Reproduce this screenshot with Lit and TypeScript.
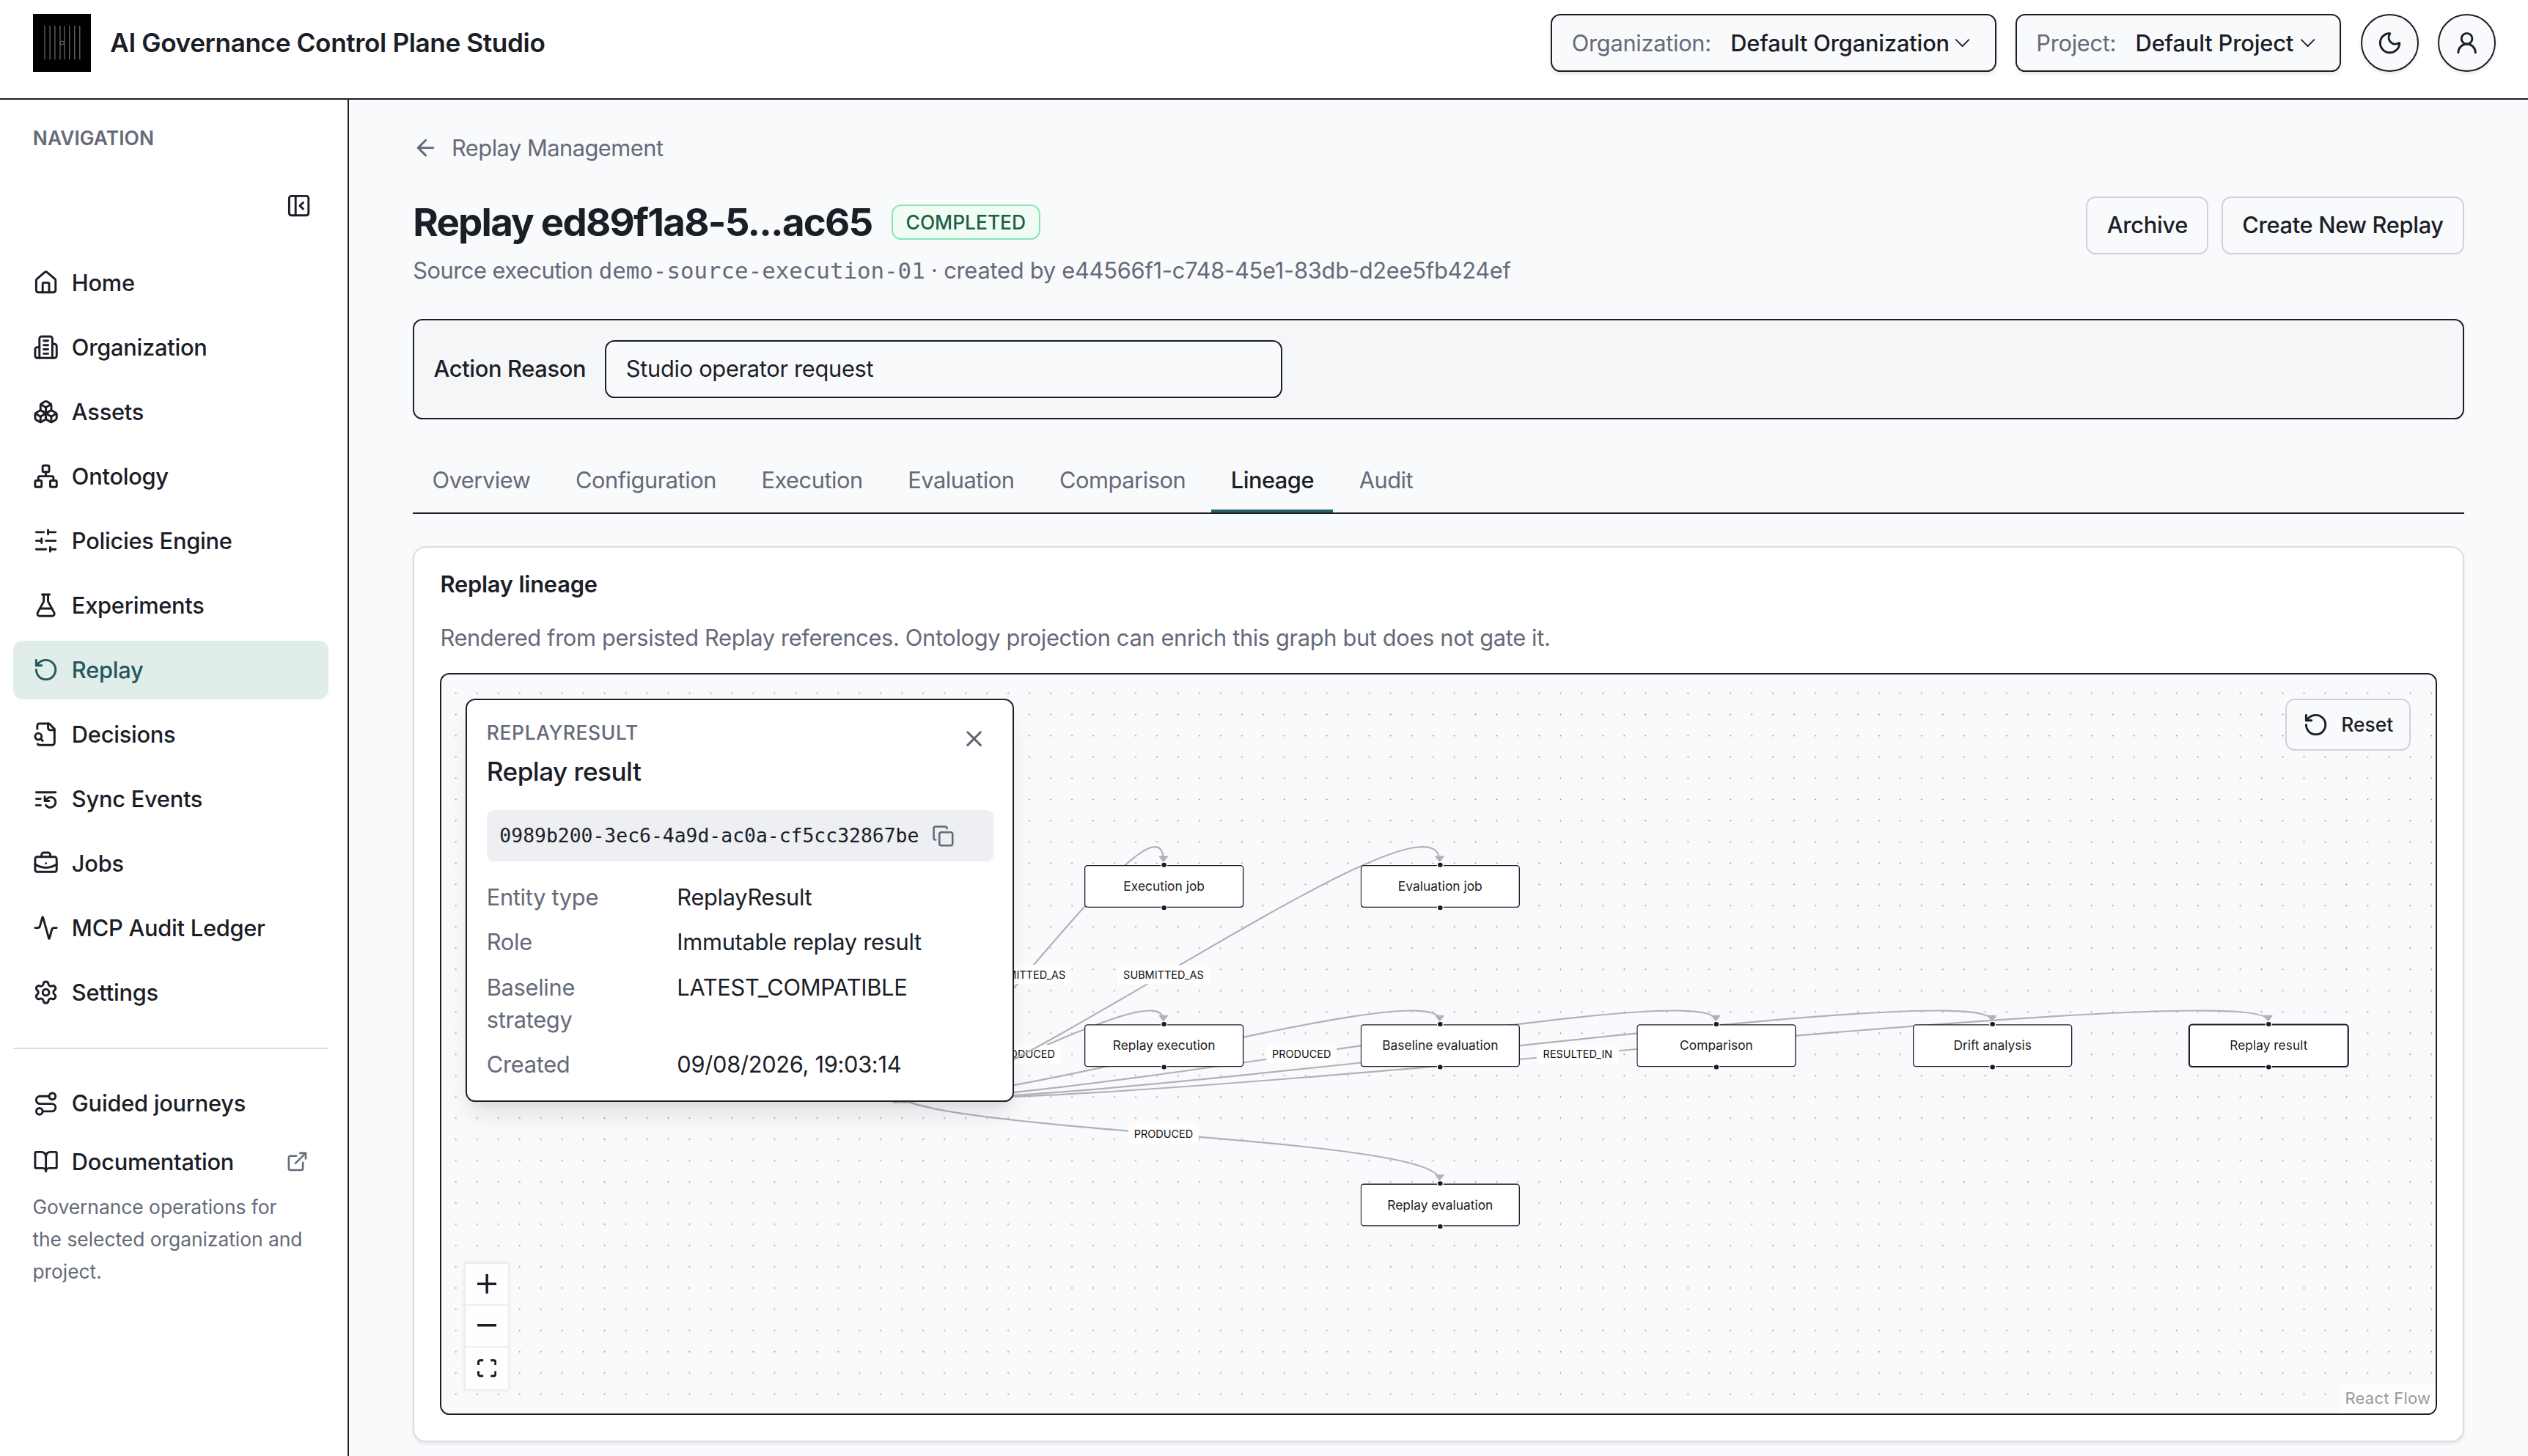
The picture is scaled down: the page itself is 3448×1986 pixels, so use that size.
import { LitElement, html, svg, css } from "lit";
import { customElement, property } from "lit/decorators.js";
import { classMap } from "lit/directives/class-map.js";

const ICONS: Record<string, unknown> = {
  home: svg`<path d="M15 21v-8a1 1 0 0 0-1-1h-4a1 1 0 0 0-1 1v8"/><path d="M3 10a2 2 0 0 1 .709-1.528l7-5.999a2 2 0 0 1 2.582 0l7 5.999A2 2 0 0 1 21 10v9a2 2 0 0 1-2 2H5a2 2 0 0 1-2-2z"/>`,
  building: svg`<path d="M6 22V4a2 2 0 0 1 2-2h8a2 2 0 0 1 2 2v18Z"/><path d="M6 12H4a2 2 0 0 0-2 2v6a2 2 0 0 0 2 2h2"/><path d="M18 9h2a2 2 0 0 1 2 2v9a2 2 0 0 1-2 2h-2"/><path d="M10 6h4M10 10h4M10 14h4M10 18h4"/>`,
  boxes: svg`<path d="M2.97 12.92A2 2 0 0 0 2 14.63v3.24a2 2 0 0 0 .97 1.71l3 1.8a2 2 0 0 0 2.06 0L12 19v-5.5l-5-3-4.03 2.42Z"/><path d="m7 16.5-4.74-2.85"/><path d="m7 16.5 5-3"/><path d="M7 16.5v5.17"/><path d="M12 13.5V19l3.97 2.38a2 2 0 0 0 2.06 0l3-1.8a2 2 0 0 0 .97-1.71v-3.24a2 2 0 0 0-.97-1.71L17 10.5l-5 3Z"/><path d="m17 16.5-5-3"/><path d="m17 16.5 4.74-2.85"/><path d="M17 16.5v5.17"/><path d="M7.97 4.42A2 2 0 0 0 7 6.13v4.37l5 3 5-3V6.13a2 2 0 0 0-.97-1.71l-3-1.8a2 2 0 0 0-2.06 0l-3 1.8Z"/><path d="M12 8 7.26 5.15"/><path d="m12 8 4.74-2.85"/><path d="M12 13.5V8"/>`,
  network: svg`<rect x="16" y="16" width="6" height="6" rx="1"/><rect x="2" y="16" width="6" height="6" rx="1"/><rect x="9" y="2" width="6" height="6" rx="1"/><path d="M5 16v-3a1 1 0 0 1 1-1h12a1 1 0 0 1 1 1v3"/><path d="M12 12V8"/>`,
  sliders: svg`<path d="M21 4h-7M10 4H3M21 12h-9M8 12H3M21 20h-5M12 20H3M14 2v4M8 10v4M16 18v4"/>`,
  flask: svg`<path d="M14 2v6a2 2 0 0 0 .245.96l5.51 10.08A2 2 0 0 1 18 22H6a2 2 0 0 1-1.755-2.96l5.51-10.08A2 2 0 0 0 10 8V2"/><path d="M6.453 15h11.094"/><path d="M8.5 2h7"/>`,
  replay: svg`<path d="M3 12a9 9 0 1 0 9-9 9.75 9.75 0 0 0-6.74 2.74L3 8"/><path d="M3 3v5h5"/>`,
  fileSearch: svg`<path d="M14 2v4a2 2 0 0 0 2 2h4"/><path d="M4.268 21a2 2 0 0 0 1.727 1H18a2 2 0 0 0 2-2V7l-5-5H6a2 2 0 0 0-2 2v3"/><path d="m9 18-1.5-1.5"/><circle cx="5" cy="14" r="3"/>`,
  listRestart: svg`<path d="M21 6H3"/><path d="M7 12H3"/><path d="M7 18H3"/><path d="M12 18a5 5 0 0 0 9-3 4.5 4.5 0 0 0-4.5-4.5c-1.33 0-2.54.54-3.41 1.41L11 14"/><path d="M11 10v4h4"/>`,
  briefcase: svg`<path d="M12 12h.01"/><path d="M16 6V4a2 2 0 0 0-2-2h-4a2 2 0 0 0-2 2v2"/><path d="M22 13a18.15 18.15 0 0 1-20 0"/><rect width="20" height="14" x="2" y="6" rx="2"/>`,
  activity: svg`<path d="M22 12h-2.48a2 2 0 0 0-1.93 1.46l-2.35 8.36a.25.25 0 0 1-.48 0L9.24 2.18a.25.25 0 0 0-.48 0l-2.35 8.36A2 2 0 0 1 4.49 12H2"/>`,
  settings: svg`<path d="M9.671 4.136a2.34 2.34 0 0 1 4.659 0 2.34 2.34 0 0 0 3.319 1.915 2.34 2.34 0 0 1 2.33 4.033 2.34 2.34 0 0 0 0 3.831 2.34 2.34 0 0 1-2.33 4.033 2.34 2.34 0 0 0-3.319 1.915 2.34 2.34 0 0 1-4.659 0 2.34 2.34 0 0 0-3.32-1.915 2.34 2.34 0 0 1-2.33-4.033 2.34 2.34 0 0 0 0-3.831A2.34 2.34 0 0 1 6.35 6.051a2.34 2.34 0 0 0 3.319-1.915"/><circle cx="12" cy="12" r="3"/>`,
  route: svg`<circle cx="6" cy="19" r="3"/><path d="M9 19h8.5a3.5 3.5 0 0 0 0-7h-11a3.5 3.5 0 0 1 0-7H15"/><circle cx="18" cy="5" r="3"/>`,
  book: svg`<path d="M12 7v14"/><path d="M3 18a1 1 0 0 1-1-1V4a1 1 0 0 1 1-1h5a4 4 0 0 1 4 4 4 4 0 0 1 4-4h5a1 1 0 0 1 1 1v13a1 1 0 0 1-1 1h-6a3 3 0 0 0-3 3 3 3 0 0 0-3-3z"/>`,
  external: svg`<path d="M15 3h6v6"/><path d="M10 14 21 3"/><path d="M18 13v6a2 2 0 0 1-2 2H5a2 2 0 0 1-2-2V8a2 2 0 0 1 2-2h6"/>`,
  panelClose: svg`<rect width="18" height="18" x="3" y="3" rx="2"/><path d="M9 3v18"/><path d="m16 15-3-3 3-3"/>`,
  moon: svg`<path d="M20.985 12.486a9 9 0 1 1-9.473-9.472c.405-.022.617.46.402.803a6 6 0 0 0 8.268 8.268c.344-.215.825-.004.803.401"/>`,
  user: svg`<circle cx="12" cy="8" r="5"/><path d="M20 21a8 8 0 0 0-16 0"/>`,
  chevron: svg`<path d="m6 9 6 6 6-6"/>`,
  back: svg`<path d="m12 19-7-7 7-7"/><path d="M19 12H5"/>`,
  close: svg`<path d="M18 6 6 18"/><path d="m6 6 12 12"/>`,
  copy: svg`<rect width="14" height="14" x="8" y="8" rx="2"/><path d="M4 16c-1.1 0-2-.9-2-2V4c0-1.1.9-2 2-2h10c1.1 0 2 .9 2 2"/>`,
};

@customElement("ui-icon")
class UiIcon extends LitElement {
  @property() name = "";
  @property({ type: Number }) size = 16;
  @property({ type: Number }) stroke = 2;
  static styles = css`
    :host { display: inline-flex; flex: none; }
    svg { display: block; fill: none; stroke: currentColor; stroke-linecap: round; stroke-linejoin: round; }
  `;
  render() {
    return html`<svg width=${this.size} height=${this.size} viewBox="0 0 24 24" stroke-width=${this.stroke}>${ICONS[this.name]}</svg>`;
  }
}

/* Flow geometry: node grid is 260 × 150, scaled by the viewport zoom. */
const NODE_W = 150;
const SOURCE = { x: -185, y: 210 };

interface FlowNode { id: string; label: string; x: number; y: number; selected?: boolean }
const NODES: FlowNode[] = [
  { id: "execJob", label: "Execution job", x: 0, y: 0 },
  { id: "evalJob", label: "Evaluation job", x: 260, y: 0 },
  { id: "exec", label: "Replay execution", x: 0, y: 150 },
  { id: "base", label: "Baseline evaluation", x: 260, y: 150 },
  { id: "comp", label: "Comparison", x: 520, y: 150 },
  { id: "drift", label: "Drift analysis", x: 780, y: 150 },
  { id: "result", label: "Replay result", x: 1040, y: 150, selected: true },
  { id: "eval", label: "Replay evaluation", x: 260, y: 300 },
];
const EDGES: { to: string; label?: string; w?: number }[] = [
  { to: "execJob", label: "SUBMITTED_AS", w: 86.6 },
  { to: "exec", label: "PRODUCED", w: 66 },
  { to: "evalJob", label: "SUBMITTED_AS", w: 86.6 },
  { to: "base" },
  { to: "eval", label: "PRODUCED", w: 66 },
  { to: "comp", label: "PRODUCED", w: 66 },
  { to: "drift" },
  { to: "result", label: "RESULTED_IN", w: 77.5 },
];

@customElement("lineage-graph")
class LineageGraph extends LitElement {
  static styles = css`
    :host { display: block; position: relative; height: 460px; box-sizing: border-box; border: 1px solid #1b1e27; border-radius: 6px; background: #f9fafc; overflow: hidden; }
    .layer { position: absolute; inset: 0; width: 100%; height: 100%; }
    .edge { fill: none; stroke: #b1b1b7; stroke-width: 1.5; }
    .elabel { font: 400 10px Inter, sans-serif; fill: #111; text-anchor: middle; }
    .viewport { position: absolute; left: 398.3px; top: 117.9px; width: 0; height: 0; transform: scale(0.6585); transform-origin: 0 0; }
    .node { position: absolute; box-sizing: border-box; width: 150px; height: 40px; display: flex; align-items: center; justify-content: center; border: 1px solid #1a192b; border-radius: 3px; background: #fff; color: #222; font: 400 12px/18px Inter, sans-serif; white-space: nowrap; }
    .node.selected { box-shadow: 0 0 0 0.6px #1a192b; }
    .handle { position: absolute; left: 50%; width: 6px; height: 6px; margin-left: -3px; box-sizing: border-box; border: 1px solid #fff; border-radius: 50%; background: #1a192b; }
    .handle.in { top: -4px; }
    .handle.out { bottom: -4px; }

    .panel { position: absolute; left: 15px; top: 15px; width: 340px; box-sizing: border-box; padding: 12px; border: 1px solid #1b1e27; border-radius: 6px; background: #fff; box-shadow: 0 10px 15px -3px rgba(0,0,0,.1), 0 4px 6px -4px rgba(0,0,0,.1); display: flex; flex-direction: column; gap: 12px; }
    .phead { display: flex; justify-content: space-between; }
    .kind { font-size: 12px; line-height: 16px; font-weight: 500; letter-spacing: 0.3px; color: #656a79; }
    .ptitle { margin-top: 4px; font-size: 16px; line-height: 24px; font-weight: 500; letter-spacing: -0.25px; }
    .pclose { width: 24px; height: 24px; display: flex; align-items: center; justify-content: center; color: #5f6473; }
    .idbox { height: 32px; box-sizing: border-box; padding: 0 8px; display: flex; align-items: center; gap: 8px; border-radius: 4px; background: #eeeff3; font: 400 12px/16px "DejaVu Sans Mono", monospace; letter-spacing: 0; }
    .idbox ui-icon { color: #656a79; }
    .facts { display: grid; grid-template-columns: 110px 1fr; gap: 8px; margin: 0; line-height: 20px; letter-spacing: -0.14px; }
    dt { color: #656a79; }
    dt.two-line { max-width: 80px; }
    dd { margin: 0; }

    .reset { position: absolute; right: 15.3px; top: 15px; height: 32px; box-sizing: border-box; padding: 0 10px; display: flex; align-items: center; gap: 8px; border: 1px solid #d0d1da; border-radius: 6px; background: #f9fafc; font-size: 12px; font-weight: 500; }
    .controls { position: absolute; left: 15px; bottom: 15px; box-shadow: 0 0 2px 1px rgba(0,0,0,.08); }
    .ctl { width: 26px; height: 26px; box-sizing: border-box; display: flex; align-items: center; justify-content: center; background: #fefefe; border-bottom: 1px solid #eee; color: #1b1e27; }
    .ctl:last-child { border-bottom: 0; }
    .ctl svg { width: 12px; max-height: 12px; fill: currentColor; }
    .attr { position: absolute; right: 0; bottom: 0; padding: 2px 3px; background: rgba(255,255,255,.7); color: #999; font-size: 10px; line-height: 14.5px; letter-spacing: 0.12px; }
  `;

  private edge(e: { to: string; label?: string; w?: number }) {
    const n = NODES.find((k) => k.id === e.to)!;
    const tx = n.x + NODE_W / 2;
    const ty = n.y - 3;
    const d = ty - SOURCE.y;
    const o = d >= 0 ? d * 0.5 : 6.25 * Math.sqrt(-d);
    const mx = (SOURCE.x + tx) / 2;
    const my = (SOURCE.y + ty) / 2;
    return svg`
      <path class="edge" marker-end="url(#arrow)" d="M${SOURCE.x},${SOURCE.y} C${SOURCE.x},${SOURCE.y + o} ${tx},${ty - o} ${tx},${ty}"></path>
      ${e.label
        ? svg`<rect x=${mx - e.w! / 2} y=${my - 9} width=${e.w!} height="18" rx="4" fill="#fff"></rect>
            <text class="elabel" x=${mx} y=${my + 3.6}>${e.label}</text>`
        : null}`;
  }

  render() {
    return html`
      <svg class="layer">
        <defs>
          <pattern id="dots" x="2.42" y="5.05" width="13.17" height="13.17" patternUnits="userSpaceOnUse">
            <circle cx="6.58" cy="6.58" r="0.42" fill="#91919a"></circle>
          </pattern>
          <marker id="arrow" markerWidth="12.5" markerHeight="12.5" viewBox="-10 -10 20 20" orient="auto-start-reverse" refX="0" refY="0">
            <polyline points="-5,-4 0,0 -5,4 -5,-4" fill="#b1b1b7" stroke="#b1b1b7" stroke-width="1" stroke-linecap="round" stroke-linejoin="round"></polyline>
          </marker>
        </defs>
        <rect width="100%" height="100%" fill="url(#dots)"></rect>
        <g transform="translate(398.3 117.9) scale(0.6585)">${EDGES.map((e) => this.edge(e))}</g>
      </svg>
      <div class="viewport">
        ${NODES.map(
          (n) => html`<div class=${classMap({ node: true, selected: !!n.selected })} style="left:${n.x}px;top:${n.y}px">
            <span class="handle in"></span>${n.label}<span class="handle out"></span>
          </div>`
        )}
      </div>

      <section class="panel">
        <div class="phead">
          <div>
            <div class="kind">REPLAYRESULT</div>
            <div class="ptitle">Replay result</div>
          </div>
          <span class="pclose"><ui-icon name="close"></ui-icon></span>
        </div>
        <div class="idbox"><span>0989b200-3ec6-4a9d-ac0a-cf5cc32867be</span><ui-icon name="copy" size="14"></ui-icon></div>
        <dl class="facts">
          <dt>Entity type</dt><dd>ReplayResult</dd>
          <dt>Role</dt><dd>Immutable replay result</dd>
          <dt class="two-line">Baseline strategy</dt><dd>LATEST_COMPATIBLE</dd>
          <dt>Created</dt><dd>09/08/2026, 19:03:14</dd>
        </dl>
      </section>

      <div class="reset"><ui-icon name="replay"></ui-icon><span>Reset</span></div>
      <div class="controls">
        <div class="ctl"><svg viewBox="0 0 32 32"><path d="M32 18.133H18.133V32h-4.266V18.133H0v-4.266h13.867V0h4.266v13.867H32z"/></svg></div>
        <div class="ctl"><svg viewBox="0 0 32 5"><path d="M0 0h32v4.2H0z"/></svg></div>
        <div class="ctl"><svg viewBox="0 0 32 30"><path d="M3.692 4.63c0-.53.4-.938.939-.938h5.215V0H4.708C2.13 0 0 2.054 0 4.63v5.216h3.692V4.631zM27.354 0h-5.2v3.692h5.17c.53 0 .984.4.984.939v5.215H32V4.631A4.624 4.624 0 0027.354 0zm.954 24.83c0 .532-.4.94-.939.94h-5.215v3.768h5.215c2.577 0 4.631-2.13 4.631-4.707v-5.139h-3.692v5.139zm-23.677.94c-.531 0-.939-.4-.939-.94v-5.138H0v5.139c0 2.577 2.13 4.707 4.708 4.707h5.138V25.77H4.631z"/></svg></div>
      </div>
      <div class="attr">React Flow</div>
    `;
  }
}

const NAV: [string, string][] = [
  ["home", "Home"],
  ["building", "Organization"],
  ["boxes", "Assets"],
  ["network", "Ontology"],
  ["sliders", "Policies Engine"],
  ["flask", "Experiments"],
  ["replay", "Replay"],
  ["fileSearch", "Decisions"],
  ["listRestart", "Sync Events"],
  ["briefcase", "Jobs"],
  ["activity", "MCP Audit Ledger"],
  ["settings", "Settings"],
];
const TABS = ["Overview", "Configuration", "Execution", "Evaluation", "Comparison", "Lineage", "Audit"];
const LOGO_BARS = [7.3, 10.5, 13.6, 16.8, 19.6, 22.6, 25.8, 29];

@customElement("app-root")
class AppRoot extends LitElement {
  static styles = css`
    :host { display: block; height: 100vh; overflow: hidden; }
    .app { zoom: 2.2; height: 100%; display: flex; flex-direction: column; background: #f9fafc; color: #1b1e27; font-family: Inter, sans-serif; font-size: 14px; line-height: 20px; overflow: hidden; }
    .header { flex: none; height: 61.8px; box-sizing: border-box; padding: 8.7px 19.8px 0 20.3px; display: flex; align-items: flex-start; background: #fff; border-bottom: 1px solid #1b1e27; }
    .logo { width: 36px; height: 36px; display: block; background: #000; }
    .brand { margin-left: 12px; font-size: 16px; line-height: 36px; font-weight: 600; letter-spacing: -0.18px; flex: 1; }
    .tools { display: flex; gap: 12px; }
    .select { height: 36px; box-sizing: border-box; padding: 0 12px; display: flex; align-items: center; border: 1px solid #1b1e27; border-radius: 6px; background: #f9fafc; box-shadow: 0 1px 2px rgba(0,0,0,.1); white-space: nowrap; }
    .select .k { color: #656a79; margin-right: 12px; letter-spacing: -0.13px; }
    .select .v { flex: 1; font-weight: 500; letter-spacing: -0.08px; }
    .select.org { width: 276px; }
    .select.proj { width: 202px; }
    .round { width: 36px; height: 36px; box-sizing: border-box; display: flex; align-items: center; justify-content: center; border: 1px solid #1b1e27; border-radius: 50%; background: #f9fafc; box-shadow: 0 1px 2px rgba(0,0,0,.1); }

    .body { flex: 1; min-height: 0; display: flex; }
    .side { flex: none; width: 216.4px; box-sizing: border-box; padding: 16px 12px 0 8.2px; background: #fff; border-right: 1px solid #1b1e27; display: flex; flex-direction: column; }
    .navlabel { padding-left: 12.2px; font-size: 12px; line-height: 16px; font-weight: 600; letter-spacing: 0.02px; color: #656a79; }
    .collapse { align-self: flex-end; width: 36px; height: 36px; margin: 15.7px 0.4px 12px 0; display: flex; align-items: center; justify-content: center; }
    .nav { display: flex; flex-direction: column; gap: 4px; }
    .item { height: 36px; padding: 0 12.4px 0 12.3px; display: flex; align-items: center; gap: 8px; border-radius: 6px; font-weight: 500; letter-spacing: -0.12px; }
    .item.active { background: #e0ede8; color: #255662; }
    .foot { margin-top: 16px; padding-top: 16px; border-top: 1px solid #dedee1; }
    .item .ext { margin-left: auto; color: #656a79; }
    .note { margin: 0; padding: 0 12px; font-size: 12px; line-height: 20px; letter-spacing: -0.01px; color: #656a79; }

    .main { flex: 1; min-width: 0; padding: 20px 39.5px 0 39.6px; display: flex; flex-direction: column; gap: 20px; }
    .back { display: flex; align-items: center; gap: 8px; color: #656a79; height: 20px; letter-spacing: -0.23px; }
    .top { display: flex; justify-content: space-between; align-items: flex-start; height: 56px; }
    .titlerow { display: flex; align-items: center; gap: 12px; height: 32px; }
    h1 { margin: 0; font-size: 24px; line-height: 32px; font-weight: 700; letter-spacing: -0.81px; }
    .badge { height: 22px; box-sizing: border-box; padding: 0 8px; border: 1px solid #86e6b6; border-radius: 6px; background: #effdf5; color: #225d46; font-size: 12px; line-height: 20px; font-weight: 500; letter-spacing: -0.01px; }
    .sub { margin-top: 4px; color: #656a79; letter-spacing: -0.11px; }
    .sub .lead { letter-spacing: -0.22px; }
    .mono { font-family: "DejaVu Sans Mono", monospace; letter-spacing: 0; }
    .actions { display: flex; gap: 8px; }
    .btn { height: 36px; box-sizing: border-box; padding: 0 12px; border: 1px solid #d0d1da; border-radius: 6px; line-height: 34px; font-weight: 500; letter-spacing: -0.15px; }
    .reason { flex: none; height: 62px; box-sizing: border-box; padding: 12px; display: flex; align-items: center; gap: 12px; border: 1px solid #1b1e27; border-radius: 6px; background: #f5f6f8; font-weight: 500; letter-spacing: -0.16px; }
    .input { width: 420px; height: 36px; box-sizing: border-box; padding: 0 12px; border: 1px solid #1b1e27; border-radius: 6px; background: #f9fafc; line-height: 34px; font-weight: 400; letter-spacing: -0.14px; }
    .tabs { flex: none; display: flex; gap: 4px; border-bottom: 1px solid #1b1e27; letter-spacing: -0.22px; }
    .tab { padding: 8px 12px; border-bottom: 2px solid transparent; color: #656a79; }
    .tab.active { color: #1b1e27; font-weight: 500; border-bottom-color: #265f6b; }
    .card { flex: none; padding: 16px; border: 1px solid #dcdde4; border-radius: 8px; background: #fff; box-shadow: 0 1px 2px rgba(0,0,0,.08); }
    .ctitle { font-size: 14px; line-height: 14px; font-weight: 600; letter-spacing: -0.08px; }
    .cdesc { margin: 16px 0 12px; color: #656a79; letter-spacing: -0.16px; }
  `;

  render() {
    return html`<div class="app">
      <header class="header">
        <svg class="logo" viewBox="0 0 36 36">
          ${LOGO_BARS.map((x) => svg`<path d="M${x} 7.3V28.3" stroke="#66645f" stroke-width="0.6"/>`)}
          <ellipse cx="18.1" cy="18" rx="1.1" ry="1.2" fill="#000" stroke="#8d8776" stroke-width="0.4"/>
        </svg>
        <div class="brand">AI Governance Control Plane Studio</div>
        <div class="tools">
          <div class="select org"><span class="k">Organization:</span><span class="v">Default Organization</span><ui-icon name="chevron" size="16" stroke="1.25"></ui-icon></div>
          <div class="select proj"><span class="k">Project:</span><span class="v">Default Project</span><ui-icon name="chevron" size="16" stroke="1.25"></ui-icon></div>
          <div class="round"><ui-icon name="moon"></ui-icon></div>
          <div class="round"><ui-icon name="user"></ui-icon></div>
        </div>
      </header>
      <div class="body">
        <aside class="side">
          <div class="navlabel">NAVIGATION</div>
          <div class="collapse"><ui-icon name="panelClose"></ui-icon></div>
          <nav class="nav">
            ${NAV.map(([icon, label]) => html`<div class=${classMap({ item: true, active: label === "Replay" })}><ui-icon name=${icon}></ui-icon><span>${label}</span></div>`)}
          </nav>
          <div class="foot">
            <div class="item"><ui-icon name="route"></ui-icon><span>Guided journeys</span></div>
            <div class="item"><ui-icon name="book"></ui-icon><span>Documentation</span><ui-icon class="ext" name="external" size="14"></ui-icon></div>
            <p class="note">Governance operations for the selected organization and project.</p>
          </div>
        </aside>
        <main class="main">
          <div class="back"><ui-icon name="back"></ui-icon><span>Replay Management</span></div>
          <div class="top">
            <div>
              <div class="titlerow"><h1>Replay ed89f1a8-5...ac65</h1><span class="badge">COMPLETED</span></div>
              <div class="sub"><span class="lead">Source execution </span><span class="mono">demo-source-execution-01</span> · created by e44566f1-c748-45e1-83db-d2ee5fb424ef</div>
            </div>
            <div class="actions"><div class="btn">Archive</div><div class="btn">Create New Replay</div></div>
          </div>
          <div class="reason"><span>Action Reason</span><div class="input">Studio operator request</div></div>
          <div class="tabs">${TABS.map((t) => html`<div class=${classMap({ tab: true, active: t === "Lineage" })}>${t}</div>`)}</div>
          <section class="card">
            <div class="ctitle">Replay lineage</div>
            <p class="cdesc">Rendered from persisted Replay references. Ontology projection can enrich this graph but does not gate it.</p>
            <lineage-graph></lineage-graph>
          </section>
        </main>
      </div>
    </div>`;
  }
}
